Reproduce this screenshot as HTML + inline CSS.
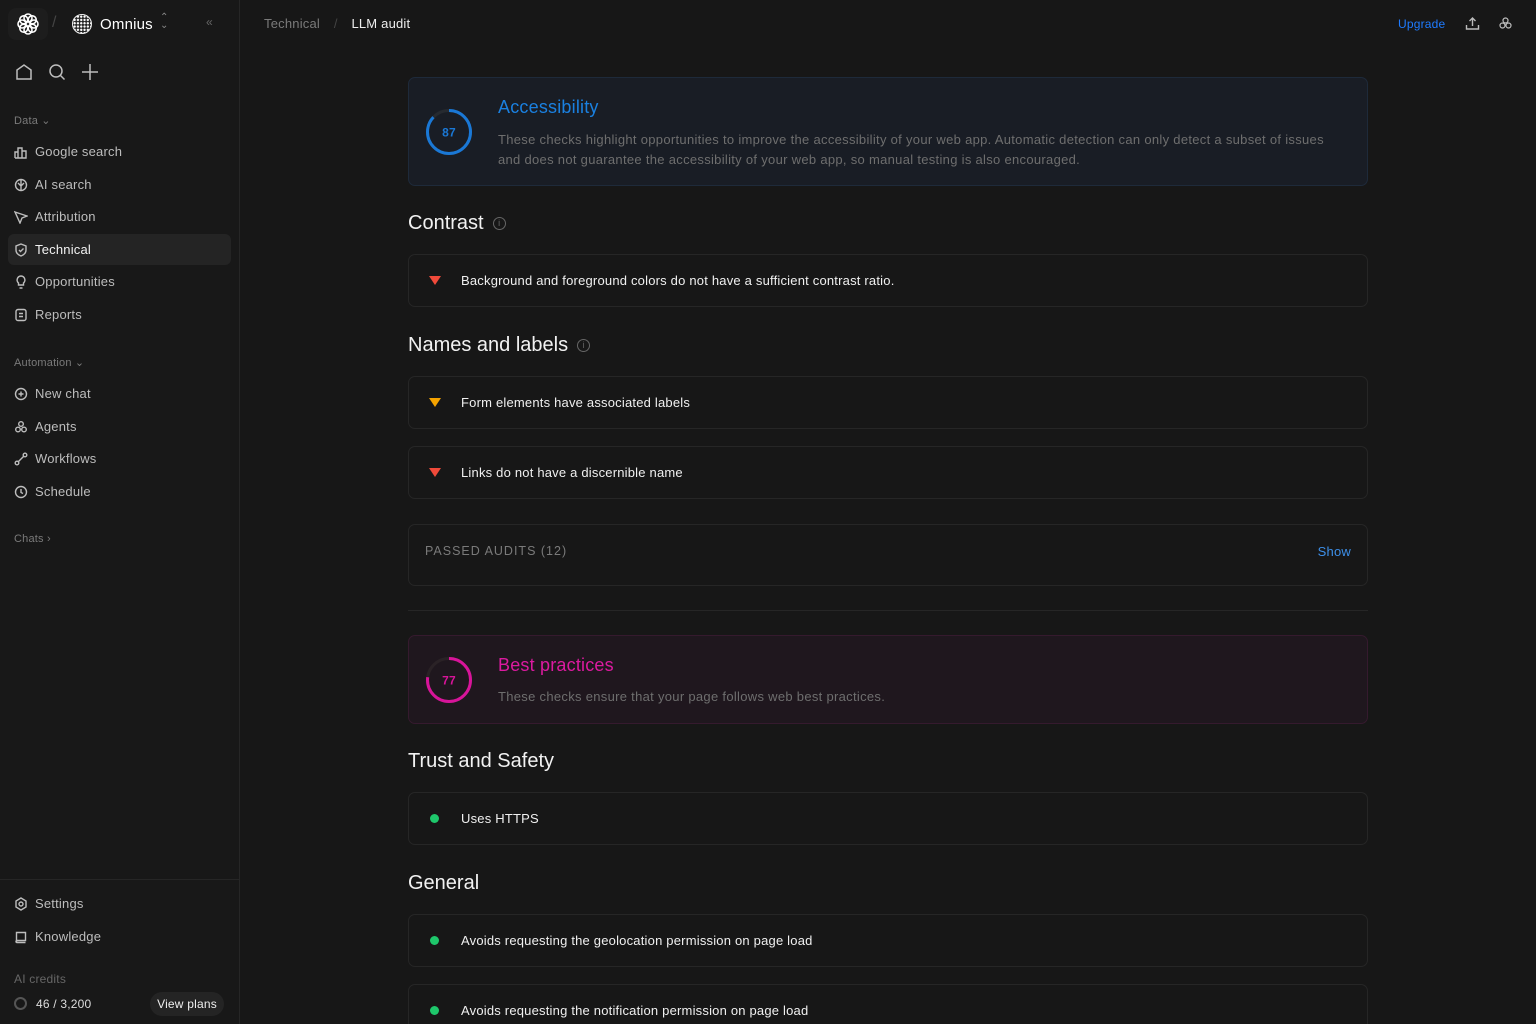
<!DOCTYPE html>
<html><head><meta charset="utf-8"><style>
*{box-sizing:border-box;margin:0;padding:0}
html,body{width:1536px;height:1024px;overflow:hidden}
body{background:#171717;font-family:"Liberation Sans",sans-serif;color:#e8e8e8;position:relative;letter-spacing:0.2px}
.sb{position:absolute;left:0;top:0;width:240px;height:1024px;background:#181818;border-right:1px solid #262626}
.abs{position:absolute}
.nav{position:absolute;left:8px;width:223px;height:31px;display:flex;align-items:center;padding-left:6px;font-size:13px;color:#bdbdbd}
.nav svg{width:14px;height:14px;margin-right:7px;stroke:#bdbdbd;fill:none;stroke-width:1.4}
.sec{position:absolute;left:14px;font-size:11px;color:#7a7a7a}
.card{position:absolute;left:408px;width:960px;border:1px solid #262626;border-radius:7px;background:#171717}
.item{height:51px;display:flex;align-items:center;font-size:13px;color:#f0f0f0}
.h{position:absolute;left:408px;font-size:20px;color:#f2f2f2;display:flex;align-items:center;letter-spacing:0}
.tri{width:0;height:0;border-left:6px solid transparent;border-right:6px solid transparent;border-top:9px solid #f04a3a;margin:0 20px 0 20px}
.dot{width:9px;height:9px;border-radius:50%;background:#1ec76b;margin:0 22px 0 21px}
.info{width:13px;height:13px;border:1.3px solid #666;border-radius:50%;margin-left:9px;font-size:9px;color:#666;text-align:center;line-height:11px}
</style></head><body>
<div class="sb">
 <div class="abs" style="left:8px;top:8px;width:40px;height:32px;border-radius:8px;background:#1d1d1d"></div>
 <svg class="abs" style="left:16px;top:12px" width="24" height="24" viewBox="0 0 24 24" fill="none" stroke="#fff" stroke-width="1.6"><circle cx="12" cy="6" r="4"/><circle cx="12" cy="18" r="4"/><circle cx="6" cy="12" r="4"/><circle cx="18" cy="12" r="4"/><circle cx="7.8" cy="7.8" r="4"/><circle cx="16.2" cy="16.2" r="4"/><circle cx="16.2" cy="7.8" r="4"/><circle cx="7.8" cy="16.2" r="4"/></svg>
 <div class="abs" style="left:52px;top:14px;color:#444;font-size:16px">/</div>
 <div class="abs" style="left:72px;top:14px;width:20px;height:20px;border-radius:50%;background:radial-gradient(circle,#fff 1px,#222 1.3px) 0 0/3.3px 3.3px;border:1px solid #eee"></div>
 <div class="abs" style="left:100px;top:16px;font-size:15px;color:#fff">Omnius</div>
 <div class="abs" style="left:160px;top:14px;font-size:10px;color:#888;line-height:8px">⌃<br>⌄</div>
 <div class="abs" style="left:206px;top:15px;font-size:12px;color:#666">«</div>
 <svg class="abs" style="left:14px;top:62px" width="90" height="20" viewBox="0 0 90 20" fill="none" stroke="#bdbdbd" stroke-width="1.5"><path d="M3 17V8l7-5 7 5v9z"/><circle cx="42" cy="9" r="6"/><path d="M46.5 13.5l4 4"/><path d="M76 2v16M68 10h16"/></svg>
 <div class="sec" style="top:114px">Data ⌄</div>
 <div class="nav" style="top:136px"><svg viewBox="0 0 14 14"><path d="M1 13V7h3v6M4 13V3h4v10M8 13V6h4v7H1"/></svg>Google search</div>
 <div class="nav" style="top:169px"><svg viewBox="0 0 14 14"><circle cx="7" cy="7" r="5.5"/><path d="M7 2v10M4 5l3 3 3-3"/></svg>AI search</div>
 <div class="nav" style="top:201px"><svg viewBox="0 0 14 14"><path d="M1 2l12 4-5 2-2 5z"/></svg>Attribution</div>
 <div class="nav" style="top:234px;background:#242424;border-radius:6px;color:#f2f2f2"><svg viewBox="0 0 14 14"><path d="M7 1l5 2v4c0 3-2.5 5-5 6-2.5-1-5-3-5-6V3z"/><path d="M5 7l1.5 1.5L9.5 5.5"/></svg>Technical</div>
 <div class="nav" style="top:266px"><svg viewBox="0 0 14 14"><path d="M5 10h4M5.5 13h3M7 1a4 4 0 0 0-2.5 7v2h5V8A4 4 0 0 0 7 1z"/></svg>Opportunities</div>
 <div class="nav" style="top:299px"><svg viewBox="0 0 14 14"><rect x="2" y="1.5" width="10" height="11" rx="2"/><path d="M5 5.5h4M5 8.5h4"/></svg>Reports</div>
 <div class="sec" style="top:356px">Automation ⌄</div>
 <div class="nav" style="top:378px"><svg viewBox="0 0 14 14"><circle cx="7" cy="7" r="5.5"/><path d="M7 4.5v5M4.5 7h5"/></svg>New chat</div>
 <div class="nav" style="top:411px"><svg viewBox="0 0 14 14"><circle cx="7" cy="4" r="2.3"/><circle cx="4" cy="9.5" r="2.3"/><circle cx="10" cy="9.5" r="2.3"/></svg>Agents</div>
 <div class="nav" style="top:443px"><svg viewBox="0 0 14 14"><circle cx="3" cy="11" r="1.8"/><circle cx="11" cy="3" r="1.8"/><path d="M4.5 9.5l5-5"/></svg>Workflows</div>
 <div class="nav" style="top:476px"><svg viewBox="0 0 14 14"><circle cx="7" cy="7" r="5.5"/><path d="M7 4v3.5l2 1"/></svg>Schedule</div>
 <div class="sec" style="top:533px">Chats ›</div>
 <div class="abs" style="left:0;top:879px;width:239px;border-top:1px solid #262626"></div>
 <div class="nav" style="top:888px"><svg viewBox="0 0 14 14"><circle cx="7" cy="7" r="2"/><path d="M7 1l5 3v6l-5 3-5-3V4z"/></svg>Settings</div>
 <div class="nav" style="top:921px"><svg viewBox="0 0 14 14"><path d="M2.5 12V2.5h9v8h-8.5a1 1 0 0 0 0 2h8.5"/></svg>Knowledge</div>
 <div class="sec" style="top:972px;font-size:12px;color:#666">AI credits</div>
 <div class="abs" style="left:14px;top:997px;width:13px;height:13px;border-radius:50%;border:2px solid #555"></div>
 <div class="abs" style="left:36px;top:997px;font-size:12px;color:#ddd">46 / 3,200</div>
 <div class="abs" style="left:150px;top:992px;width:74px;height:24px;border-radius:12px;background:#242424;font-size:12px;color:#eee;text-align:center;line-height:24px">View plans</div>
</div>
<div class="abs" style="left:264px;top:16px;font-size:13px;color:#7a7a7a">Technical <span style="color:#444;margin:0 10px">/</span> <span style="color:#eee">LLM audit</span></div>
<div class="abs" style="left:1398px;top:17px;font-size:12px;color:#1e7bff">Upgrade</div>
<svg class="abs" style="left:1465px;top:16px" width="15" height="15" viewBox="0 0 15 15" fill="none" stroke="#bbb" stroke-width="1.4"><path d="M7.5 10V2M4.5 5l3-3 3 3M1.5 9v4h12V9"/></svg>
<svg class="abs" style="left:1498px;top:16px" width="15" height="15" viewBox="0 0 15 15" fill="none" stroke="#bbb" stroke-width="1.2"><circle cx="7.5" cy="4.5" r="2.5"/><circle cx="4.5" cy="9.5" r="2.5"/><circle cx="10.5" cy="9.5" r="2.5"/></svg>

<div class="card" style="top:77px;height:109px;background:#191d25;border-color:#1e2a3a">
 <svg class="abs" style="left:16px;top:30px" width="48" height="48" viewBox="0 0 48 48"><circle cx="24" cy="24" r="21.5" fill="none" stroke="#262a30" stroke-width="3"/><circle cx="24" cy="24" r="21.5" fill="none" stroke="#1a78d6" stroke-width="3" stroke-dasharray="117.5 135" transform="rotate(-90 24 24)"/><text x="24" y="28.5" text-anchor="middle" font-size="12" fill="#1a78d6" font-family="Liberation Sans" font-weight="bold">87</text></svg>
 <div class="abs" style="left:89px;top:19px;font-size:18px;color:#1a80e0">Accessibility</div>
 <div class="abs" style="left:89px;top:52px;width:845px;font-size:13px;line-height:20px;color:#6e6e6e;letter-spacing:0.3px">These checks highlight opportunities to improve the accessibility of your web app. Automatic detection can only detect a subset of issues and does not guarantee the accessibility of your web app, so manual testing is also encouraged.</div>
</div>
<div class="h" style="top:212px">Contrast<span class="info">i</span></div>
<div class="card" style="top:254px"><div class="item"><span class="tri"></span>Background and foreground colors do not have a sufficient contrast ratio.</div></div>
<div class="h" style="top:334px">Names and labels<span class="info">i</span></div>
<div class="card" style="top:376px"><div class="item"><span class="tri" style="border-top-color:#f5a300"></span>Form elements have associated labels</div></div>
<div class="card" style="top:446px"><div class="item"><span class="tri"></span>Links do not have a discernible name</div></div>
<div class="card" style="top:524px;height:62px"><div class="abs" style="left:16px;top:19px;font-size:12.5px;letter-spacing:1px;color:#7a7a7a">PASSED AUDITS (12)</div><div class="abs" style="right:16px;top:19px;font-size:13px;color:#3d8fe8">Show</div></div>
<div class="abs" style="left:408px;top:610px;width:960px;border-top:1px solid #262626"></div>
<div class="card" style="top:635px;height:89px;background:#1f171e;border-color:#351a2e">
 <svg class="abs" style="left:16px;top:20px" width="48" height="48" viewBox="0 0 48 48"><circle cx="24" cy="24" r="21.5" fill="none" stroke="#2a2226" stroke-width="3"/><circle cx="24" cy="24" r="21.5" fill="none" stroke="#d8149a" stroke-width="3" stroke-dasharray="104 135" transform="rotate(-90 24 24)"/><text x="24" y="28.5" text-anchor="middle" font-size="12" fill="#d8149a" font-family="Liberation Sans" font-weight="bold">77</text></svg>
 <div class="abs" style="left:89px;top:19px;font-size:18px;color:#dc1aa0">Best practices</div>
 <div class="abs" style="left:89px;top:53px;font-size:13px;color:#6e6e6e;letter-spacing:0.3px">These checks ensure that your page follows web best practices.</div>
</div>
<div class="h" style="top:750px">Trust and Safety</div>
<div class="card" style="top:792px"><div class="item"><span class="dot"></span>Uses HTTPS</div></div>
<div class="h" style="top:872px">General</div>
<div class="card" style="top:914px"><div class="item"><span class="dot"></span>Avoids requesting the geolocation permission on page load</div></div>
<div class="card" style="top:984px"><div class="item"><span class="dot"></span>Avoids requesting the notification permission on page load</div></div>
</body></html>
